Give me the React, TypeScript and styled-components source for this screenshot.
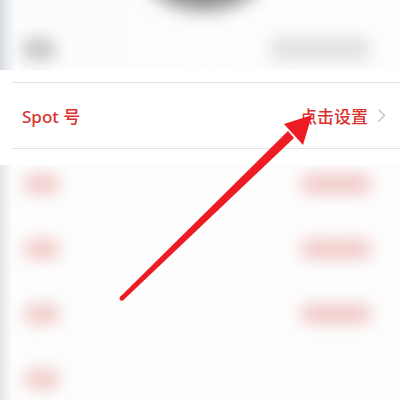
import React from "react";
import styled, { createGlobalStyle } from "styled-components";

const GlobalStyle = createGlobalStyle`
  html, body {
    margin: 0;
    padding: 0;
    background: #ffffff;
  }
  body {
    font-family: "Noto Sans", "Noto Sans CJK SC", sans-serif;
  }
`;

const Page = styled.div`
  position: relative;
  width: 400px;
  height: 400px;
  overflow: hidden;
  background: #ffffff;
  display: flex;
  flex-direction: column;
`;

const Blurred = styled.div<{ $h: number }>`
  position: relative;
  height: ${(p) => p.$h}px;
  flex-shrink: 0;
  background: linear-gradient(90deg, #d6d9df 0px, #eceef1 8px, #fcfcfd 16px, #fdfdfd 100%);
  overflow: hidden;
`;

const HeaderInner = styled.div`
  height: 100%;
  display: flex;
  align-items: center;
  justify-content: space-between;
  padding: 28px 30px 0 22px;
  box-sizing: border-box;
  filter: blur(8px);
`;

const AvatarShadow = styled.div`
  position: absolute;
  left: 148px;
  top: -56px;
  width: 112px;
  height: 66px;
  border-radius: 50%;
  background: #8a8a8a;
  filter: blur(9px);
`;

const GrayDot = styled.div`
  width: 34px;
  height: 22px;
  border-radius: 11px;
  background: #c6c6c6;
`;

const GrayBar = styled.div`
  width: 100px;
  height: 24px;
  border-radius: 8px;
  background: #e2e2e2;
`;

const Gap = styled.div<{ $h: number }>`
  height: ${(p) => p.$h}px;
  flex-shrink: 0;
`;

const Divider = styled.div`
  height: 1px;
  margin-left: 12px;
  background: #e3e3e3;
  flex-shrink: 0;
`;

const Row = styled.div`
  height: 65px;
  flex-shrink: 0;
  display: flex;
  align-items: center;
  justify-content: space-between;
  padding: 0 14px 0 22px;
`;

const Label = styled.span`
  font-size: 17px;
  font-weight: 500;
  color: #d9322e;
`;

const Action = styled.span`
  display: flex;
  align-items: center;
  gap: 9px;
  font-size: 17px;
  font-weight: 500;
  color: #d9322e;
`;

const ListArea = styled(Blurred)`
  flex: 1;
  height: auto;
  margin-top: 16px;
  background: linear-gradient(90deg, #e4e5ea 0px, #f1f1f4 6px, #fdfdfd 13px, #fdfdfd 100%);
`;

const ListInner = styled.div`
  display: flex;
  flex-direction: column;
  padding: 9px 28px 0 24px;
  filter: blur(8px);
`;

const ListRow = styled.div`
  height: 65px;
  display: flex;
  align-items: flex-start;
  justify-content: space-between;
`;

const PinkBlob = styled.div<{ $w: number }>`
  width: ${(p) => p.$w}px;
  height: 20px;
  border-radius: 10px;
  background: #f0c9c6;
`;

const ArrowLayer = styled.svg`
  position: absolute;
  left: 0;
  top: 0;
  pointer-events: none;
`;

const rows = [true, true, true, false];

export default function App() {
  return (
    <>
      <GlobalStyle />
      <Page>
        <Blurred $h={70}>
          <AvatarShadow />
          <HeaderInner>
            <GrayDot />
            <GrayBar />
          </HeaderInner>
        </Blurred>
        <Gap $h={12} />
        <Divider />
        <Row>
          <Label>Spot 号</Label>
          <Action>
            点击设置
            <svg width="9" height="15" viewBox="0 0 9 15">
              <path d="M1.5 1.5 L7.5 7.5 L1.5 13.5" fill="none" stroke="#c8c8cc" strokeWidth="1.6" />
            </svg>
          </Action>
        </Row>
        <Divider />
        <ListArea $h={0}>
          <ListInner>
            {rows.map((right, i) => (
              <ListRow key={i}>
                <PinkBlob $w={36} />
                {right && <PinkBlob $w={72} />}
              </ListRow>
            ))}
          </ListInner>
        </ListArea>
        <ArrowLayer width="400" height="400" viewBox="0 0 400 400">
          <path d="M120 297 L123.5 300 L294 138 L288 131 Z" fill="#ed1c24" />
          <circle cx="121.8" cy="298.5" r="2.3" fill="#ed1c24" />
          <path d="M312 115 L284 124 L303 145 Z" fill="#ed1c24" />
        </ArrowLayer>
      </Page>
    </>
  );
}
